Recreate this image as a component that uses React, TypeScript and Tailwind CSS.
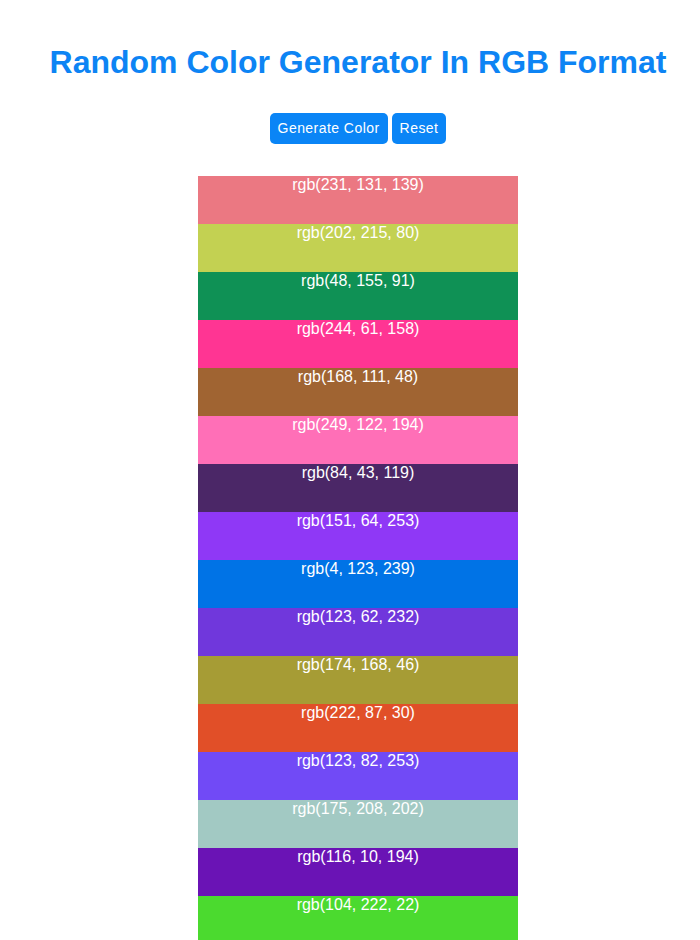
const SWATCHES = [
  { label: "rgb(231, 131, 139)", bg: "bg-[#eb7882]" },
  { label: "rgb(202, 215, 80)", bg: "bg-[#c3d152]" },
  { label: "rgb(48, 155, 91)", bg: "bg-[#0f9155]" },
  { label: "rgb(244, 61, 158)", bg: "bg-[#ff3593]" },
  { label: "rgb(168, 111, 48)", bg: "bg-[#a06432]" },
  { label: "rgb(249, 122, 194)", bg: "bg-[#ff6fb7]" },
  { label: "rgb(84, 43, 119)", bg: "bg-[#4b2767]" },
  { label: "rgb(151, 64, 253)", bg: "bg-[#8f38f6]" },
  { label: "rgb(4, 123, 239)", bg: "bg-[#0073e6]" },
  { label: "rgb(123, 62, 232)", bg: "bg-[#7037dc]" },
  { label: "rgb(174, 168, 46)", bg: "bg-[#a69c35]" },
  { label: "rgb(222, 87, 30)", bg: "bg-[#e14f28]" },
  { label: "rgb(123, 82, 253)", bg: "bg-[#714af6]" },
  { label: "rgb(175, 208, 202)", bg: "bg-[#a2c9c3]" },
  { label: "rgb(116, 10, 194)", bg: "bg-[#6a13b5]" },
  { label: "rgb(104, 222, 22)", bg: "bg-[#4bda2f]" },
];

export default function App() {
  return (
    <div
      className="min-h-screen bg-white pl-4 pt-[44px] flex flex-col items-center"
      style={{ fontFamily: '"Liberation Sans", Arial, sans-serif' }}
    >
      <h1 className="text-[32px] leading-[36px] font-bold text-[#0d84f4] text-center whitespace-nowrap">
        Random Color Generator In RGB Format
      </h1>

      {/* controls */}
      <div className="mt-[33px] flex gap-[4px]">
        <button className="h-[31px] px-2 rounded-[5px] bg-[#0a85f6] text-white text-[14px] tracking-[0.45px]">
          Generate Color
        </button>
        <button className="h-[31px] px-2 rounded-[5px] bg-[#0a85f6] text-white text-[14px] tracking-[0.45px]">
          Reset
        </button>
      </div>

      {/* swatch list */}
      <div className="mt-[32px] w-[320px] flex flex-col">
        {SWATCHES.map((s) => (
          <div key={s.label} className={`h-[48px] ${s.bg} text-white text-[16px] leading-[18px] text-center`}>
            {s.label}
          </div>
        ))}
      </div>
    </div>
  );
}
